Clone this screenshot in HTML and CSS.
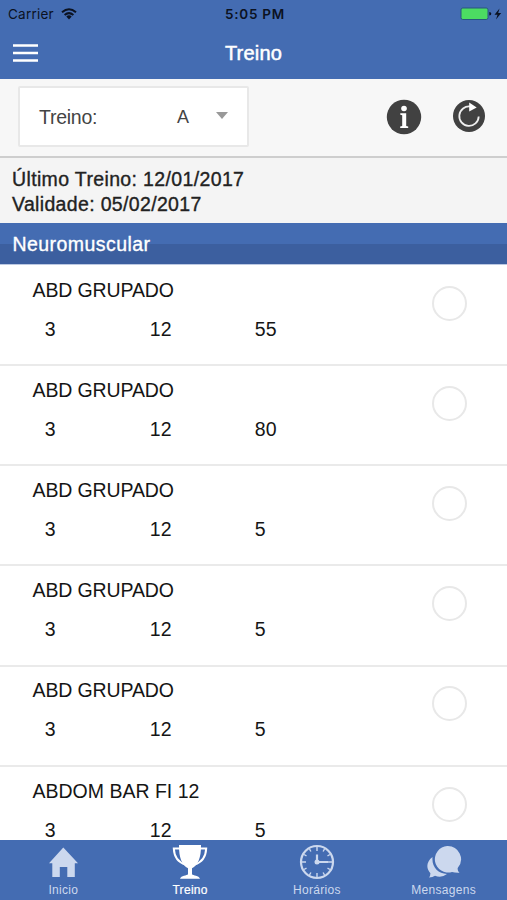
FILE: index.html
```html
<!DOCTYPE html>
<html lang="pt">
<head>
<meta charset="utf-8">
<title>Treino</title>
<link rel="stylesheet" href="styles.css">
</head>
<body>
<div class="app">
  <header class="top">
    <div class="status">
      <div class="carrier"><span>Carrier</span>
        <svg width="16" height="12" viewBox="0 0 16 12" fill="none" stroke="#0b1222" stroke-width="2"><path d="M1 4.3Q8-1.8 15 4.3M3.6 7Q8 3.2 12.4 7"/><path d="M5.3 8.5Q8 6.2 10.7 8.5L8 11.5Z" fill="#0b1222" stroke="none"/></svg>
      </div>
      <span class="time">5:05 PM</span>
      <svg class="battery" width="42" height="14" viewBox="0 0 42 14"><rect x="1" y="1" width="27" height="11.5" rx="1.8" fill="#4cdc62" stroke="#27577c"/><path d="M29.3 5q2 0 2 1.8t-2 1.8z" fill="#0b1222"/><path d="M39.5 1.5L34.5 7.7h3l-1.5 4.8 5.2-6.5h-3z" fill="#0b1222"/></svg>
    </div>
    <div class="nav">
      <svg class="menu" width="25" height="20" viewBox="0 0 25 20" stroke="#fff" stroke-width="2.6"><path d="M0 2.5h25M0 10h25M0 17.5h25"/></svg>
      <h1>Treino</h1>
      <div class="side"></div>
    </div>
  </header>
  <section class="toolbar">
    <div class="select"><span class="label">Treino:</span><span class="value">A</span><i class="caret"></i></div>
    <svg class="info" width="36" height="36" viewBox="0 0 36 36"><circle cx="18" cy="18" r="17.2" fill="#414141"/><circle cx="18" cy="9.5" r="2.8" fill="#fff"/><path d="M14.3 14.2h5.9v12.8l2 .6v1.4h-8v-1.4l2-.6V16.2l-1.9-.5z" fill="#fff"/></svg>
    <svg class="reload" width="34" height="34" viewBox="0 0 34 34"><circle cx="17" cy="17" r="16" fill="#414141"/><path d="M18.5 7.6A9.7 9.7 0 1 0 26.7 17.5" fill="none" stroke="#eee" stroke-width="1.8"/><path d="M17.2 3.6L24.7 8.6 17.2 12.6z" fill="#fff"/></svg>
  </section>
  <section class="dates"><div class="last">Último Treino: 12/01/2017</div><div class="valid">Validade: 05/02/2017</div></section>
  <h2>Neuromuscular</h2>
  <main class="list">
    <article><div class="data"><h3>ABD GRUPADO</h3><div class="nums"><span>3</span><span>12</span><span>55</span></div></div><i class="check"></i></article>
    <article><div class="data"><h3>ABD GRUPADO</h3><div class="nums"><span>3</span><span>12</span><span>80</span></div></div><i class="check"></i></article>
    <article><div class="data"><h3>ABD GRUPADO</h3><div class="nums"><span>3</span><span>12</span><span>5</span></div></div><i class="check"></i></article>
    <article><div class="data"><h3>ABD GRUPADO</h3><div class="nums"><span>3</span><span>12</span><span>5</span></div></div><i class="check"></i></article>
    <article><div class="data"><h3>ABD GRUPADO</h3><div class="nums"><span>3</span><span>12</span><span>5</span></div></div><i class="check"></i></article>
    <article><div class="data"><h3 class="wide">ABDOM BAR FI 12</h3><div class="nums"><span>3</span><span>12</span><span>5</span></div></div><i class="check"></i></article>
  </main>
  <nav class="tabs">
    <div class="tab"><svg width="36" height="36" viewBox="0 0 36 36"><path d="M18.3 3.5L33 19.2H29.8V33H22.3V23H14.8V33H7.3V19.2H4Z" fill="currentColor"/></svg><span>Inicio</span></div>
    <div class="tab active"><svg width="36" height="36" viewBox="0 0 36 36"><path d="M7 1H29C29.3 14 25.7 21.4 20 24.2V30.2C21 31.6 27 31.3 28 34.8H8C9 31.3 15 31.6 16 30.2V24.2C10.3 21.4 6.7 14 7 1Z" fill="currentColor"/><path d="M8 4.5H1.8C2.2 13 6.5 18.5 13.5 20.5M28 4.5H34.2C33.8 13 29.5 18.5 22.5 20.5" fill="none" stroke="currentColor" stroke-width="2"/></svg><span>Treino</span></div>
    <div class="tab"><svg width="36" height="36" viewBox="0 0 36 36" fill="none" stroke="currentColor"><circle cx="18" cy="18" r="16" stroke-width="2.2"/><path d="M18 3v4M18 29v4M3 18h4M29 18h4M10.5 5l1.4 2.5M25.5 5l-1.4 2.5M5 10.5l2.5 1.4M31 10.5l-2.5 1.4M5 25.5l2.5-1.4M31 25.5l-2.5-1.4M10.5 31l1.4-2.5M25.5 31l-1.4-2.5" stroke-width="1.4"/><path d="M18 10.5V18H29" stroke-width="2.2"/><circle cx="18" cy="18" r="2.5" fill="currentColor" stroke="none"/></svg><span>Horários</span></div>
    <div class="tab"><svg width="36" height="36" viewBox="0 0 36 36"><path d="M6.5 13C-.2 18 .2 25 4.4 29.2Q4.4 32 3 33.6 6.8 33.5 9 31.8 15.8 34.2 21 30C12 29.5 5.5 23 6.5 13Z" fill="currentColor"/><path d="M21.2 2A13.3 13.3 0 1 0 26 28Q29 29 33.5 28.8 31.3 27 31.7 24A13.3 13.3 0 0 0 21.2 2Z" fill="currentColor"/></svg><span>Mensagens</span></div>
  </nav>
</div>
</body>
</html>
```
FILE: styles.css
```css
* { box-sizing: border-box; }
body { margin: 0; font-family: "Liberation Sans", sans-serif; background: #fff; }
h1, h2, h3 { margin: 0; font-weight: 400; }
svg { display: block; flex: none; }
.app { height: 900px; display: flex; flex-direction: column; overflow: hidden; }
.top { height: 79px; flex: none; background: #446cb2; }
.status { height: 27px; padding: 0 5px 0 8px; display: grid; grid-template-columns: 1fr auto 1fr; align-items: center; font-family: Inter, sans-serif; font-size: 13.5px; color: #0b1222; }
.carrier { display: flex; align-items: center; gap: 7px; letter-spacing: .22px; }
.time { font-weight: 600; letter-spacing: .75px; }
.battery { justify-self: end; }
.nav { height: 51px; padding: 0 13px; display: flex; align-items: center; justify-content: space-between; }
.side { width: 25px; }
h1 { font-size: 20px; color: #fff; -webkit-text-stroke: .5px #fff; line-height: 24px; letter-spacing: .2px; }
.toolbar { height: 79px; flex: none; display: flex; padding: 7px 21px 0 18px; background: #f7f7f7; border-bottom: 2px solid #cecece; }
.select { width: 231px; height: 61px; display: flex; align-items: center; padding: 2px 19px 0 19px; border: 2px solid #e8e8e8; border-radius: 2px; background: #fff; color: #444; }
.label { width: 138px; font-size: 19.5px; letter-spacing: -.25px; }
.value { width: 39px; font-size: 18px; }
.caret { border: 6px solid transparent; border-top: 7px solid #999; border-bottom: 0; margin-bottom: 5px; }
.info { margin: 12.5px 0 0 137px; }
.reload { margin: 13px 0 0 30px; }
.dates { height: 65px; flex: none; padding: 9px 12px 0; background: #f4f4f4; color: #222; font-size: 19.5px; line-height: 24.5px; -webkit-text-stroke: .35px #222; }
.last { letter-spacing: .36px; }
.valid { letter-spacing: .34px; }
h2 { height: 42px; flex: none; padding-left: 12.5px; background: linear-gradient(#446cb2 0 21px, #3c5f9f 21px); border-bottom: 1px solid #bcc9e2; color: #fff; font-size: 19.5px; line-height: 43px; letter-spacing: .45px; -webkit-text-stroke: .35px #fff; }
.list { flex: 1; min-height: 0; overflow: hidden; padding-top: 1px; }
article { height: 100.15px; padding: 11.8px 40px 0 32.5px; display: flex; justify-content: space-between; border-bottom: 2px solid #eaeaea; color: #151515; }
h3, .nums { font-size: 19.5px; line-height: 24px; }
h3 { letter-spacing: -.12px; }
h3.wide { letter-spacing: 0; }
.nums { display: grid; grid-template-columns: 105px 105px 105px; margin-top: 15px; padding-left: 12.3px; letter-spacing: .2px; }
.check { width: 35px; height: 35px; margin-top: 8px; border: 2px solid #e8e8e8; border-radius: 50%; }
.tabs { height: 60px; flex: none; display: grid; grid-template-columns: repeat(4, 1fr); background: #446cb2; }
.tab { display: flex; flex-direction: column; align-items: center; padding-top: 4px; color: #ccd8ee; font-size: 12px; line-height: 16px; }
.tab span { margin-top: 2px; letter-spacing: .3px; }
.active { color: #fff; }
.active span { -webkit-text-stroke: .2px #fff; }
```
